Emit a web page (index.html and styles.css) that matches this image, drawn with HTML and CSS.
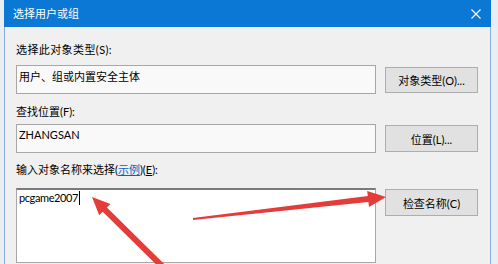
FILE: index.html
```html
<!DOCTYPE html>
<html lang="zh-CN">
<head>
<meta charset="utf-8">
<title>选择用户或组</title>
<link rel="stylesheet" href="styles.css">
</head>
<body>
<div class="screen">
  <div class="window">
    <div class="titlebar">
      <span class="title">选择用户或组</span>
      <svg class="close" width="10" height="10" viewBox="0 0 10 10"><path d="M0.5 0.5 L9.5 9.5 M9.5 0.5 L0.5 9.5" stroke="#fff" stroke-width="1.1" fill="none"/></svg>
    </div>
    <div class="content">
      <div class="label l1">选择此对象类型(S):</div>
      <div class="row r1">
        <div class="field f1">用户、组或内置安全主体</div>
        <div class="btn b1">对象类型(O)...</div>
      </div>
      <div class="label l2">查找位置(F):</div>
      <div class="row r2">
        <div class="field f2">ZHANGSAN</div>
        <div class="btn b2">位置(L)...</div>
      </div>
      <div class="label l3">输入对象名称来选择(<span class="link">示例</span>)(<span class="key">E</span>):</div>
      <div class="row r3">
        <div class="field f3"><span class="typed">pcgame2007</span><span class="caret"></span></div>
        <div class="btn b3">检查名称(C)</div>
      </div>
    </div>
  </div>
  <svg class="arrows" width="498" height="264" viewBox="0 0 498 264">
    <polygon points="92,197 110.4,203.9 106.9,207.5 165.3,265.1 161.1,269.3 102.7,211.7 99.2,215.3" fill="#e43c38"/>
    <polygon points="386,197 367.2,191.1 367.8,196 192.9,218 193.1,220 368.4,202 369,207" fill="#e43c38"/>
  </svg>
</div>
</body>
</html>
```

FILE: styles.css
```css
html, body {
  margin: 0;
  padding: 0;
}
body {
  width: 498px;
  height: 264px;
  overflow: hidden;
  background: #eaeef3;
  font-family: Lato, "Noto Sans CJK SC", sans-serif;
  font-size: 11px;
  color: #000;
}
.screen {
  position: relative;
  height: 264px;
  padding-left: 4px;
}
.window {
  width: 485px;
  height: 264px;
  border-left: 1px solid #8aaed6;
  border-right: 1px solid #8aaed6;
  background: #f0f0f0;
  display: flex;
  flex-direction: column;
}
.titlebar {
  height: 27px;
  margin: 0 -1px;
  padding: 0 10px 0 9px;
  background: #0b78d6;
  color: #fff;
  display: flex;
  align-items: center;
  justify-content: space-between;
}
.title {
  font-size: 11px;
  line-height: 16px;
}
.close {
  display: block;
}
.content {
  padding: 15px 12px 0 11px;
}
.label {
  line-height: 16px;
  white-space: nowrap;
}
.l1 {
  letter-spacing: 0.4px;
}
.link {
  color: #0a5fc4;
  text-decoration: underline;
}
.key {
  text-decoration: underline;
}
.row {
  display: flex;
  gap: 9px;
  align-items: flex-start;
}
.field {
  width: 360px;
  box-sizing: border-box;
  border: 1px solid #a7a7a7;
  background: #f9f9f9;
  padding: 2px 2px 0 2px;
  line-height: 16px;
  white-space: nowrap;
}
.btn {
  width: 93px;
  box-sizing: border-box;
  border: 1px solid #adadad;
  background: #e1e1e1;
  display: flex;
  align-items: center;
  justify-content: center;
  white-space: nowrap;
}
.r1 { margin-top: 7px; }
.f1 { height: 29px; padding-top: 3px; }
.b1 { margin-top: 2px; height: 26px; }
.l2 { margin-top: 10px; }
.r2 { margin-top: 4px; }
.f2 { height: 29px; padding-top: 2px; }
.b2 { margin-top: 1px; height: 27px; }
.l3 { margin-top: 9px; }
.r3 { margin-top: 10px; }
.f3 {
  height: 75px;
  background: #fff;
  border-top: 2px solid #7a7a7a;
  padding-top: 0;
}
.typed {
  letter-spacing: -0.4px;
}
.b3 { margin-top: 1px; height: 27px; }
.caret {
  display: inline-block;
  width: 1px;
  height: 14px;
  background: #000;
  vertical-align: -3px;
  margin-left: 1px;
}
.arrows {
  position: absolute;
  left: 0;
  top: 0;
  pointer-events: none;
}
```
